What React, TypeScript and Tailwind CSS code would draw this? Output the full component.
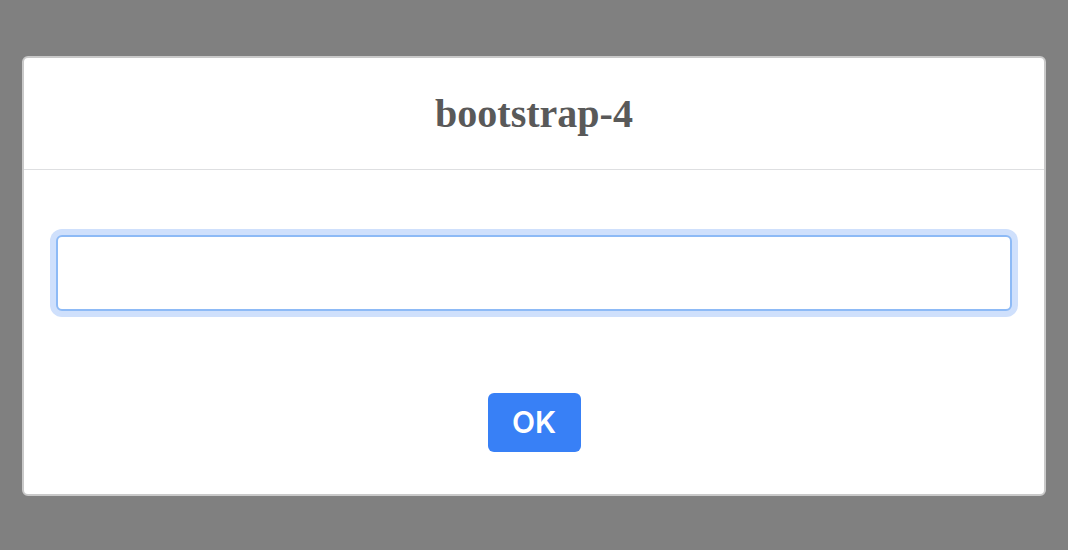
export default function App() {
  return (
    <div className="h-[550px] w-full bg-[#808080] px-[22px] pt-[56px]">
      <div className="w-full rounded-[6px] border-2 border-[#c9c9c9] bg-white">
        <div className="flex h-[112px] items-center justify-center border-b border-[#dedfe1] pt-[1px]">
          <h1 className="font-['Liberation_Serif','Times_New_Roman',serif] text-[40px] leading-none font-bold text-[#595959]">
            bootstrap-4
          </h1>
        </div>
        <div className="flex flex-col items-center px-[32px] pt-[65px] pb-[42px]">
          <input
            type="text"
            className="h-[76px] w-full rounded-[6px] border-2 border-[#8dbaf6] bg-white px-3 shadow-[0_0_0_6px_#cfe0fc] outline-none"
          />
          <button
            type="button"
            className="mt-[82px] flex h-[59px] w-[93px] items-center justify-center rounded-[6px] bg-[#3880f6] font-['Inter','Liberation_Sans',sans-serif] text-[30px] font-semibold text-white"
          >
            OK
          </button>
        </div>
      </div>
    </div>
  );
}
